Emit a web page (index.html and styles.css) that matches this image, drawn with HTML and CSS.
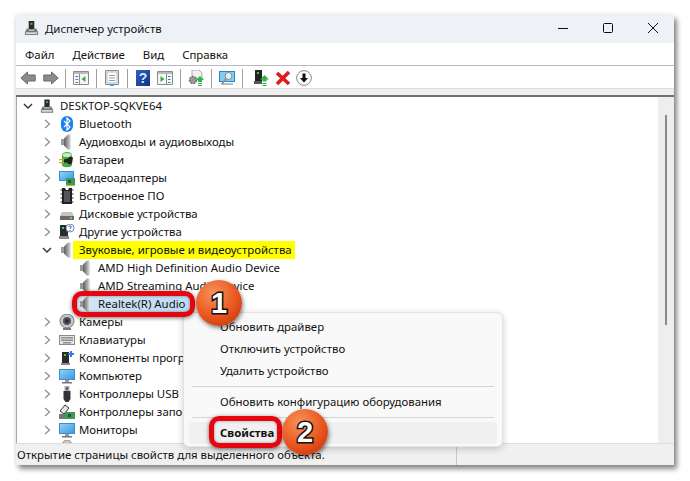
FILE: index.html
```html
<!DOCTYPE html>
<html lang="ru">
<head>
    <meta charset="UTF-8">
    <meta name="viewport" content="width=device-width, initial-scale=1.0">
    <title>Диспетчер устройств</title>
    <link rel="stylesheet" href="styles.css">
</head>
<body>
    <!-- Shared icons -->
    <svg class="defs" width="0" height="0">
        <defs>
            <linearGradient id="cone" x1="0" x2="1" y1="0" y2="0">
                <stop offset="0" stop-color="#5f5f5f"/>
                <stop offset=".6" stop-color="#a8a8a8"/>
                <stop offset="1" stop-color="#ececec"/>
            </linearGradient>
            <linearGradient id="screen" x1="0" x2="1" y1="0" y2="1">
                <stop offset="0" stop-color="#8fd2f7"/>
                <stop offset="1" stop-color="#3a9ae2"/>
            </linearGradient>
            <linearGradient id="helpbg" x1="0" x2="1" y1="0" y2="1">
                <stop offset="0" stop-color="#2a62c4"/>
                <stop offset="1" stop-color="#14337e"/>
            </linearGradient>
            <symbol id="i-pc" viewBox="0 0 16 16">
                <path d="M5 0h6v9H5z" fill="#2b2b2b"/>
                <path d="M7 2h2v2H7z" fill="#3fd04a"/>
                <path d="M3 8h2v2h6V8h2l2 4v3H1v-3z" fill="#777"/>
                <path d="M2 12h12v2H2z" fill="#d8d8d8"/>
            </symbol>
            <symbol id="i-bt" viewBox="0 0 16 16">
                <rect x="2" y="0" width="12" height="16" rx="6" fill="#1a7ff0"/>
                <path d="M5 5l6 6-3 3V2l3 3-6 6" fill="none" stroke="#fff" stroke-width="1.2"/>
            </symbol>
            <symbol id="i-sound" viewBox="0 0 16 16">
                <path d="M2 5h3v6H2z" fill="#9a9a9a"/>
                <path d="M5 4.500L9 .5h3v15H9l-4-4z" fill="url(#cone)"/>
            </symbol>
            <symbol id="i-battery" viewBox="0 0 16 16">
                <path d="M3 3c0-4 10-4 10 0v10c0 3-10 3-10 0z" fill="#3fae48"/>
                <ellipse cx="8" cy="3" rx="4.500" ry="2" fill="#c4ecc0"/>
                <path d="M5 7.500l4-1 2-2 3 1-1 6-3 1-2-2H5z" fill="#222"/>
                <path d="M0 7h5v1.300H0zM0 10h5v1.300H0z" fill="#e59a2a"/>
            </symbol>
            <symbol id="i-video" viewBox="0 0 16 16">
                <path d="M0 1h15v10H0z" fill="#3b8fd0"/>
                <path d="M1 2h13v8H1z" fill="url(#screen)"/>
                <path d="M7 8h9v7H7z" fill="#3d9a5a"/>
                <path d="M9 10h3v3H9z" fill="#1c5a33"/>
                <path d="M7 15h9v1H7z" fill="#d0b040"/>
            </symbol>
            <symbol id="i-chip" viewBox="0 0 16 16">
                <path d="M3 0h3l1 2h2l1-2h3v16H3z" fill="#222"/>
                <path d="M5 3h6v11H5z" fill="#555"/>
                <path d="M1.500 1h1.500v2H1.500zM1.500 5h1.500v2H1.500zM1.500 9h1.500v2H1.500zM1.500 13h1.500v2H1.500zM13 1h1.500v2H13zM13 5h1.500v2H13zM13 9h1.500v2H13zM13 13h1.500v2H13z" fill="#999"/>
            </symbol>
            <symbol id="i-disk" viewBox="0 0 16 16">
                <path d="M3 6h10l2 4H1z" fill="#c4c4c4"/>
                <path d="M1 10h14v4H1z" fill="#6b6b6b"/>
                <path d="M11 11h2v2h-2z" fill="#4fe05a"/>
            </symbol>
            <symbol id="i-other" viewBox="0 0 16 16">
                <path d="M1 1h8v11H1z" fill="#2b2b2b"/>
                <path d="M3 3h2v2H3z" fill="#3fd04a"/>
                <path d="M0 12h10v3H0z" fill="#8a8a8a"/>
                <circle cx="11" cy="4" r="4" fill="#fff" stroke="#6c8cb0"/>
                <path d="M9.700 3c0-1.500 2.600-1.500 2.600 0 0 1-1.300 1-1.300 2M11 6v1" fill="none" stroke="#2f64b0"/>
            </symbol>
            <symbol id="i-cam" viewBox="0 0 16 16">
                <path d="M4 14h8v2H4z" fill="#777"/>
                <circle cx="8" cy="7" r="7" fill="#c8c8c8" stroke="#777"/>
                <circle cx="8" cy="7" r="4" fill="#555"/>
                <circle cx="8" cy="7" r="2" fill="#1e3040"/>
            </symbol>
            <symbol id="i-kbd" viewBox="0 0 16 16">
                <path d="M0 3h16v10H0z" fill="#8c8c8c"/>
                <path d="M1 4h14v8H1z" fill="#e4e4e4"/>
                <path d="M2 5h12v1.500H2zM2 7.500h12V9H2z" fill="#8f8f8f"/>
                <path d="M4 10h8v1.500H4z" fill="#8f8f8f"/>
            </symbol>
            <symbol id="i-soft" viewBox="0 0 16 16">
                <path d="M3 2h7v11H3z" fill="#2b2b2b"/>
                <path d="M5 4h2v2H5z" fill="#3fd04a"/>
                <path d="M2 13h9v2H2z" fill="#8a8a8a"/>
                <path d="M9 3h2V1h2v2h2v2h-2v2h-2V5H9z" fill="#2a7fe0"/>
            </symbol>
            <symbol id="i-mon" viewBox="0 0 16 16">
                <path d="M0 1h16v11H0z" fill="#3b8fd0"/>
                <path d="M1 2h14v9H1z" fill="url(#screen)"/>
                <path d="M6 12h4v2H6z" fill="#999"/>
                <path d="M3 14h10v1.500H3z" fill="#777"/>
            </symbol>
            <symbol id="i-usb" viewBox="0 0 16 16">
                <path d="M5.500 0h5v5h-5z" fill="#aaa"/>
                <path d="M7 1.500h2v2H7z" fill="#444"/>
                <path d="M4.500 5h7v8l-2 3h-3l-2-3z" fill="#333"/>
            </symbol>
            <symbol id="i-store" viewBox="0 0 16 16">
                <path d="M1 7l5-6 4 3-5 6z" fill="#e8e8e8" stroke="#333"/>
                <path d="M0 10h8v5H0z" fill="#777"/>
                <path d="M6 8h10v7H6z" fill="#3d9a5a"/>
                <path d="M9 10h3v3H9z" fill="#1c5a33"/>
            </symbol>
            <symbol id="i-mouse" viewBox="0 0 16 16">
                <path d="M3 6c0-8 10-8 10 0v6H3z" fill="#c4c8cc" stroke="#8a8a8a"/>
            </symbol>
            <symbol id="i-back" viewBox="0 0 16 16">
                <path d="M7.500 2L.8 8l6.700 6v-3h7.700V5H7.500z" fill="#8c8c8c" stroke="#6a6a6a"/>
            </symbol>
            <symbol id="i-forward" viewBox="0 0 16 16">
                <path d="M8.500 2l6.700 6-6.700 6v-3H.8V5h7.700z" fill="#8c8c8c" stroke="#6a6a6a"/>
            </symbol>
            <symbol id="i-pane-l" viewBox="0 0 16 16">
                <path d="M.5 1.500h15v13H.5z" fill="#f6f6f6" stroke="#8b8b8b"/>
                <path d="M1 2h14v2H1z" fill="#b9b9b9"/>
                <path d="M6.500 4v10" stroke="#8b8b8b"/>
                <path d="M2.500 6h2.500v1H2.500zM2.500 9h2.500v1H2.500zM2.500 12h2.500v1H2.500z" fill="#3b7bc0"/>
                <path d="M12.500 6v6L8.500 9z" fill="#2fb344"/>
            </symbol>
            <symbol id="i-pane-r" viewBox="0 0 16 16">
                <path d="M.5 1.500h15v13H.5z" fill="#f6f6f6" stroke="#8b8b8b"/>
                <path d="M1 2h14v2H1z" fill="#b9b9b9"/>
                <path d="M9.500 4v10" stroke="#8b8b8b"/>
                <path d="M11 6h2.500v1H11zM11 9h2.500v1H11zM11 12h2.500v1H11z" fill="#3b7bc0"/>
                <path d="M3.500 6v6L7.500 9z" fill="#2fb344"/>
            </symbol>
            <symbol id="i-props" viewBox="0 0 16 16">
                <path d="M1.500 .5h13v14h-13z" fill="#f2f2f2" stroke="#8b8b8b"/>
                <path d="M3 2h10v11H3z" fill="#fff" stroke="#b8b8b8"/>
                <path d="M5 5h6v1H5zM5 7.500h6v1H5zM5 10h6v1H5z" fill="#8a9bb0"/>
                <path d="M6 14h4v2H6z" fill="#3fa0ea"/>
            </symbol>
            <symbol id="i-gear" viewBox="0 0 16 16">
                <path d="M4 0h7l3 3v6H4z" fill="#f0f0f0" stroke="#b0b0b0"/>
                <circle cx="5" cy="10" r="3.500" fill="#9a9a9a" stroke="#6e6e6e" stroke-width="1.500" stroke-dasharray="2 1"/>
                <path d="M12 6l4 4h-2v2h-4v-2H8z" fill="#2fb344"/>
                <path d="M10 13h4v1h-4zM10 15h4v1h-4z" fill="#2fb344"/>
            </symbol>
            <symbol id="i-scan" viewBox="0 0 16 16">
                <path d="M0 1h16v11H0z" fill="#2b86c8"/>
                <path d="M1 2h14v9H1z" fill="#86ccf2"/>
                <path d="M2 13h12v2H2z" fill="#bbb"/>
                <circle cx="9.500" cy="6" r="3.500" fill="#d9f0fb" stroke="#8a8a8a"/>
                <path d="M7 8.500L3 14" stroke="#8a8a8a" stroke-width="1.500"/>
            </symbol>
            <symbol id="i-update" viewBox="0 0 16 16">
                <path d="M1 0h7v11H1z" fill="#222"/>
                <path d="M3 2h2v2H3z" fill="#3fd04a"/>
                <path d="M0 11h8v3H0z" fill="#555"/>
                <path d="M10.500 5l4.500 4.500h-2.500v2h-4v-2H6z" fill="#2fb344"/>
                <path d="M8.500 13h4v1h-4zM8.500 15h4v1h-4z" fill="#2fb344"/>
            </symbol>
            <symbol id="i-remove" viewBox="0 0 16 16">
                <path d="M2 3l12 11M14 2L2 14" stroke="#e01b1b" stroke-width="3.600" fill="none"/>
            </symbol>
            <symbol id="i-down" viewBox="0 0 16 16">
                <circle cx="8" cy="8" r="7.400" fill="#fafafa" stroke="#8a8a8a"/>
                <path d="M6.500 3.500h3V8H12l-4 4.500L4 8h2.500z" fill="#111"/>
            </symbol>
            <symbol id="i-chev-r" viewBox="0 0 14 14">
                <path d="M5 3l4.500 4L5 11" fill="none" stroke="#8f8f8f" stroke-width="1.300"/>
            </symbol>
            <symbol id="i-chev-d" viewBox="0 0 14 14">
                <path d="M3 5l4 4 4-4" fill="none" stroke="#333" stroke-width="1.400"/>
            </symbol>
        </defs>
    </svg>

    <div class="window">
        <!-- Title bar -->
        <div class="titlebar">
            <svg class="title-icon"><use href="#i-pc"/></svg>
            <span class="title-text">Диспетчер устройств</span>
            <div class="controls">
                <svg class="ctrl" viewBox="0 0 10 10"><path d="M0 5.500h10" stroke="#111" fill="none"/></svg>
                <svg class="ctrl" viewBox="0 0 10 10"><rect x=".5" y=".5" width="9" height="9" rx="1" stroke="#111" fill="none"/></svg>
                <svg class="ctrl" viewBox="0 0 10 10"><path d="M0 0l10 10M10 0L0 10" stroke="#111" fill="none"/></svg>
            </div>
        </div>

        <!-- Menu -->
        <div class="menubar">
            <span class="menu-item">Файл</span>
            <span class="menu-item">Действие</span>
            <span class="menu-item">Вид</span>
            <span class="menu-item">Справка</span>
        </div>

        <!-- Toolbar -->
        <div class="toolbar">
            <div class="tool-group first">
                <svg class="tool"><use href="#i-back"/></svg>
                <svg class="tool"><use href="#i-forward"/></svg>
            </div>
            <div class="tool-group">
                <svg class="tool"><use href="#i-pane-l"/></svg>
            </div>
            <div class="tool-group">
                <svg class="tool"><use href="#i-props"/></svg>
            </div>
            <div class="tool-group tight">
                <span class="help">?</span>
                <svg class="tool"><use href="#i-pane-r"/></svg>
            </div>
            <div class="tool-group">
                <svg class="tool"><use href="#i-gear"/></svg>
            </div>
            <div class="tool-group">
                <svg class="tool"><use href="#i-scan"/></svg>
            </div>
            <div class="tool-group last">
                <svg class="tool"><use href="#i-update"/></svg>
                <svg class="tool"><use href="#i-remove"/></svg>
                <svg class="tool"><use href="#i-down"/></svg>
            </div>
        </div>
        <div class="band"></div>

        <!-- Device tree -->
        <div class="content">
            <div class="tree">
                <div class="row lvl0"><svg class="chev"><use href="#i-chev-d"/></svg><div class="row-body"><svg class="icon"><use href="#i-pc"/></svg><span class="label">DESKTOP-SQKVE64</span></div></div>
                <div class="row lvl1"><svg class="chev"><use href="#i-chev-r"/></svg><div class="row-body"><svg class="icon"><use href="#i-bt"/></svg><span class="label">Bluetooth</span></div></div>
                <div class="row lvl1"><svg class="chev"><use href="#i-chev-r"/></svg><div class="row-body"><svg class="icon"><use href="#i-sound"/></svg><span class="label">Аудиовходы и аудиовыходы</span></div></div>
                <div class="row lvl1"><svg class="chev"><use href="#i-chev-r"/></svg><div class="row-body"><svg class="icon"><use href="#i-battery"/></svg><span class="label">Батареи</span></div></div>
                <div class="row lvl1"><svg class="chev"><use href="#i-chev-r"/></svg><div class="row-body"><svg class="icon"><use href="#i-video"/></svg><span class="label">Видеоадаптеры</span></div></div>
                <div class="row lvl1"><svg class="chev"><use href="#i-chev-r"/></svg><div class="row-body"><svg class="icon"><use href="#i-chip"/></svg><span class="label">Встроенное ПО</span></div></div>
                <div class="row lvl1"><svg class="chev"><use href="#i-chev-r"/></svg><div class="row-body"><svg class="icon"><use href="#i-disk"/></svg><span class="label">Дисковые устройства</span></div></div>
                <div class="row lvl1"><svg class="chev"><use href="#i-chev-r"/></svg><div class="row-body"><svg class="icon"><use href="#i-other"/></svg><span class="label">Другие устройства</span></div></div>
                <div class="row lvl1"><svg class="chev"><use href="#i-chev-d"/></svg><div class="row-body"><svg class="icon"><use href="#i-sound"/></svg><span class="label marked">Звуковые, игровые и видеоустройства</span></div></div>
                <div class="row lvl2"><span class="chev"></span><div class="row-body"><svg class="icon"><use href="#i-sound"/></svg><span class="label">AMD High Definition Audio Device</span></div></div>
                <div class="row lvl2"><span class="chev"></span><div class="row-body"><svg class="icon"><use href="#i-sound"/></svg><span class="label">AMD Streaming Audio Device</span></div></div>
                <div class="row lvl2"><span class="chev"></span><div class="row-body selected"><svg class="icon"><use href="#i-sound"/></svg><span class="label">Realtek(R) Audio</span></div></div>
                <div class="row lvl1"><svg class="chev"><use href="#i-chev-r"/></svg><div class="row-body"><svg class="icon"><use href="#i-cam"/></svg><span class="label">Камеры</span></div></div>
                <div class="row lvl1"><svg class="chev"><use href="#i-chev-r"/></svg><div class="row-body"><svg class="icon"><use href="#i-kbd"/></svg><span class="label">Клавиатуры</span></div></div>
                <div class="row lvl1"><svg class="chev"><use href="#i-chev-r"/></svg><div class="row-body"><svg class="icon"><use href="#i-soft"/></svg><span class="label">Компоненты программного обеспечения</span></div></div>
                <div class="row lvl1"><svg class="chev"><use href="#i-chev-r"/></svg><div class="row-body"><svg class="icon"><use href="#i-mon"/></svg><span class="label">Компьютер</span></div></div>
                <div class="row lvl1"><svg class="chev"><use href="#i-chev-r"/></svg><div class="row-body"><svg class="icon"><use href="#i-usb"/></svg><span class="label">Контроллеры USB</span></div></div>
                <div class="row lvl1"><svg class="chev"><use href="#i-chev-r"/></svg><div class="row-body"><svg class="icon"><use href="#i-store"/></svg><span class="label">Контроллеры запоминающих устройств</span></div></div>
                <div class="row lvl1"><svg class="chev"><use href="#i-chev-r"/></svg><div class="row-body"><svg class="icon"><use href="#i-mon"/></svg><span class="label">Мониторы</span></div></div>
                <div class="row lvl1"><span class="chev"></span><div class="row-body"><svg class="icon"><use href="#i-mouse"/></svg></div></div>
            </div>
            <div class="scrollbar"><div class="thumb"></div></div>
        </div>

        <!-- Status bar -->
        <div class="statusbar">
            <span class="status-text">Открытие страницы свойств для выделенного объекта.</span>
            <span class="status-cell"></span>
        </div>

        <!-- Context menu -->
        <div class="context">
            <div class="ctx-item">Обновить драйвер</div>
            <div class="ctx-item">Отключить устройство</div>
            <div class="ctx-item">Удалить устройство</div>
            <div class="ctx-sep"></div>
            <div class="ctx-item">Обновить конфигурацию оборудования</div>
            <div class="ctx-sep"></div>
            <div class="ctx-item hover">Свойства</div>
        </div>

        <!-- Callouts -->
        <div class="frame frame-one"></div>
        <div class="frame frame-two"></div>
        <div class="badge badge-one">1</div>
        <div class="badge badge-two">2</div>
    </div>
</body>
</html>
```

FILE: styles.css
```css
* {
    margin: 0;
    padding: 0;
    box-sizing: border-box;
}

html, body {
    height: 100%;
}

body {
    background: #fff;
    overflow: hidden;
    font-family: 'Noto Sans', sans-serif;
    font-size: 11.4px;
    color: #111;
}

.defs {
    position: absolute;
}

.window {
    position: relative;
    width: 658px;
    height: 450px;
    margin: 15px 0 0 16px;
    display: flex;
    flex-direction: column;
    background: #fff;
    box-shadow: 3px 4px 5px rgba(0, 0, 0, 0.45), 0 0 5px rgba(0, 0, 0, 0.12);
}

/* Title bar */
.titlebar {
    height: 28px;
    display: flex;
    align-items: center;
    padding: 0 0 2px 8px;
    background: #eef2f6;
}

.title-icon {
    width: 15px;
    height: 15px;
    margin-right: 6px;
}

.title-text {
    flex: 1;
}

.controls {
    display: flex;
    align-items: center;
    gap: 35px;
    padding-right: 16px;
}

.ctrl {
    width: 10px;
    height: 10px;
}

/* Menu */
.menubar {
    height: 23px;
    display: flex;
    align-items: center;
    padding-left: 9px;
    gap: 18px;
    border-bottom: 1px solid #b8b8c4;
}

/* Toolbar */
.toolbar {
    height: 22px;
    display: flex;
    align-items: center;
    padding: 2px 0 0 4px;
}

.tool-group {
    display: flex;
    align-items: center;
    gap: 7px;
    height: 19px;
    padding: 0 7px;
    border-right: 1px solid #a0a0a0;
}

.tool-group.first {
    padding-left: 0;
    padding-right: 6px;
}

.tool-group.tight {
    gap: 6px;
}

.tool-group.last {
    border-right: none;
    padding-left: 11px;
    gap: 5px;
}

.tool {
    width: 16px;
    height: 16px;
    flex: none;
}

.help {
    width: 14px;
    height: 16px;
    text-align: center;
    font-family: 'Liberation Sans', sans-serif;
    font-weight: bold;
    font-size: 14px;
    line-height: 16px;
    color: #d8e6ff;
    background: linear-gradient(135deg, #2a62c4, #14337e);
    margin: 0 1px;
}

.band {
    height: 9px;
    background: #eeeeee;
    border-top: 1px solid #dcdcdc;
    border-bottom: 2px solid #707070;
}

/* Device tree */
.content {
    flex: 1;
    min-height: 0;
    display: flex;
    border-left: 1px solid #a8a8a8;
}

.tree {
    flex: 1;
    overflow: hidden;
    padding-left: 4px;
}

.row {
    height: 18px;
    display: flex;
    align-items: center;
}

.lvl1 {
    padding-left: 19px;
}

.lvl2 {
    padding-left: 38px;
}

.chev {
    width: 14px;
    height: 14px;
    flex: none;
    margin-right: 5px;
}

.row-body {
    display: flex;
    align-items: center;
    height: 18px;
}

.icon {
    width: 16px;
    height: 16px;
    flex: none;
    margin-right: 4px;
}

.lvl0 .icon {
    width: 14px;
    height: 15px;
    margin-right: 6px;
}

.label {
    white-space: nowrap;
    line-height: 18px;
}

.marked {
    background: #ffff00;
    padding: 0 3px 0 6px;
    margin-left: -6px;
}

.selected {
    background: linear-gradient(90deg, #d5e5f2, #bcdcf5);
    margin-left: -2px;
    padding-left: 2px;
    padding-right: 6px;
}

.scrollbar {
    width: 16px;
    background: #eeeeee;
    display: flex;
    justify-content: center;
    padding: 18px 0 118px;
}

.thumb {
    width: 2px;
    height: 100%;
    background: #8a8a8a;
}

/* Status bar */
.statusbar {
    height: 22px;
    display: flex;
    align-items: center;
    padding-left: 1px;
    background: #f0f0f0;
    border-top: 1px solid #dcdcdc;
}

.status-text {
    flex: 1;
}

.status-cell {
    width: 218px;
    height: 100%;
    border-left: 1px solid #c8c8c8;
}

/* Context menu */
.context {
    position: absolute;
    left: 167px;
    top: 297px;
    width: 320px;
    padding: 3px 5px 2px;
    background: #f9f9f9;
    border: 1px solid #e3e3e3;
    border-radius: 6px;
    box-shadow: 0 2px 7px rgba(0, 0, 0, 0.2);
}

.ctx-item {
    height: 22px;
    line-height: 21px;
    padding-left: 31px;
    border-radius: 4px;
}

.ctx-item.hover {
    background: #f0f0f0;
    font-weight: bold;
}

.ctx-sep {
    height: 1px;
    margin: 4px 3px;
    background: #d4d4d4;
}

/* Callouts */
.frame {
    position: absolute;
    border: 5px solid #e5060f;
    border-radius: 10px;
    box-shadow: 0 1px 4px rgba(0, 0, 0, 0.55), inset 0 0 3px rgba(0, 0, 0, 0.4);
}

.frame-one {
    left: 56px;
    top: 276px;
    width: 123px;
    height: 26px;
}

.frame-two {
    left: 193px;
    top: 401px;
    width: 73px;
    height: 32px;
}

.badge {
    position: absolute;
    width: 46px;
    height: 46px;
    border-radius: 50%;
    display: flex;
    align-items: center;
    justify-content: center;
    background: radial-gradient(circle at 38% 30%, #f9925a, #e8551e 55%, #b92c06);
    box-shadow: 1px 2px 4px rgba(0, 0, 0, 0.5);
    font-family: 'Liberation Sans', sans-serif;
    font-weight: bold;
    font-size: 29px;
    color: #fff;
    -webkit-text-stroke: 3px #111;
    paint-order: stroke fill;
}

.badge-one {
    left: 180px;
    top: 265px;
}

.badge-two {
    left: 266px;
    top: 394px;
}
```
